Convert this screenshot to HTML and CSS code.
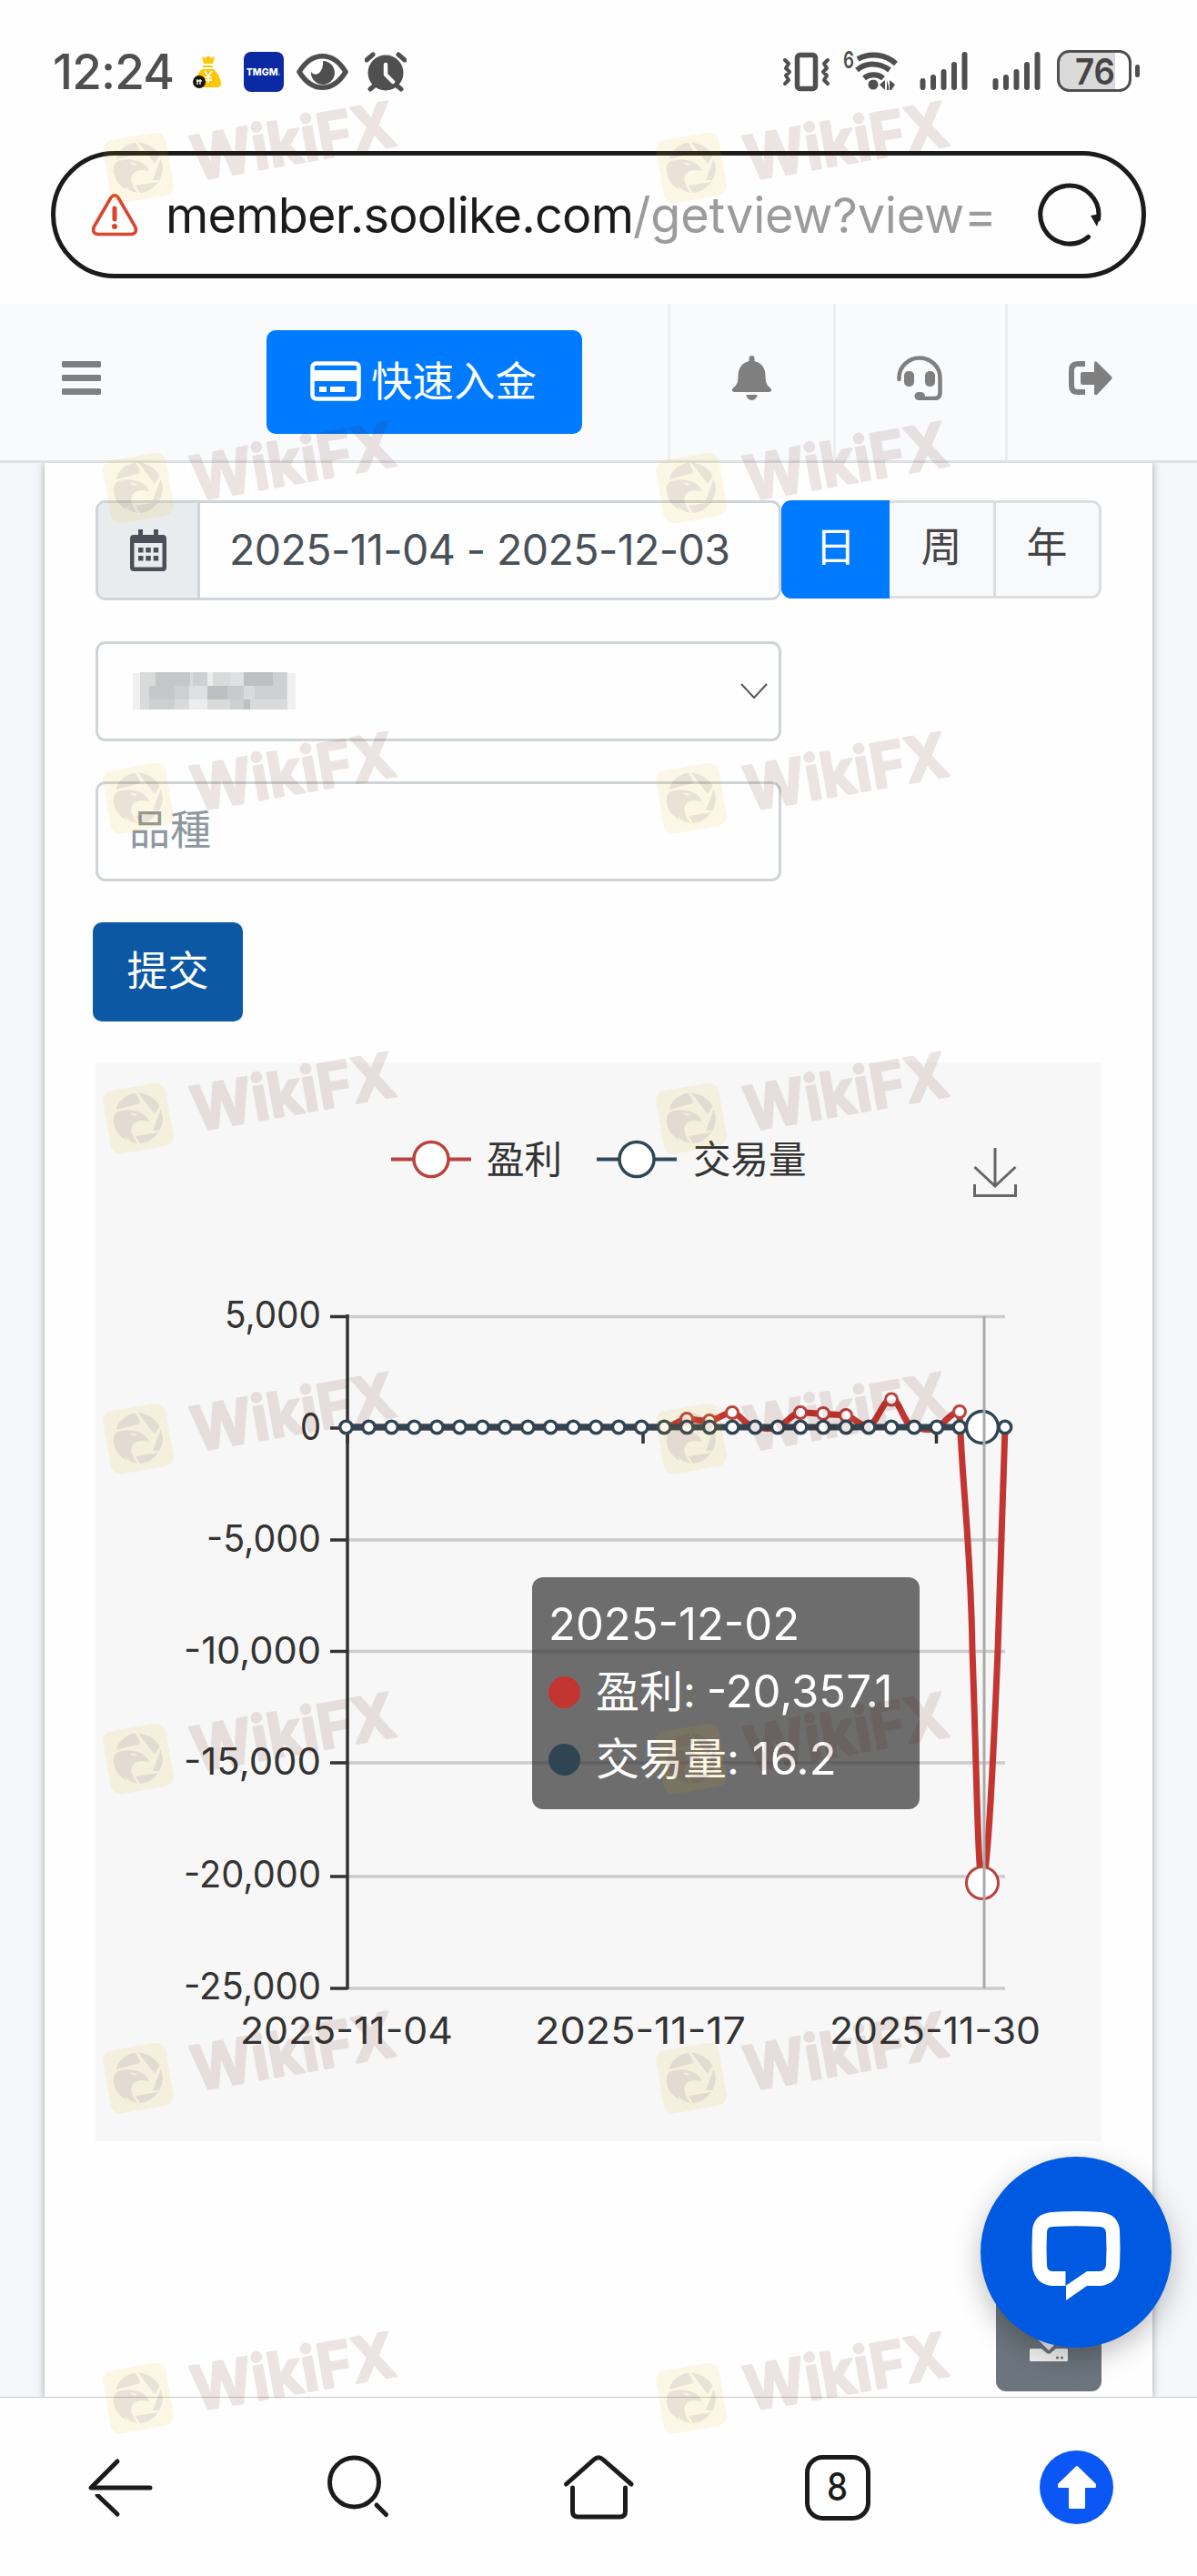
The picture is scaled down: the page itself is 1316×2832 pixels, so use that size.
FILE: index.html
```html
<!DOCTYPE html>
<html lang="zh">
<head>
<meta charset="utf-8">
<title>member.soolike.com</title>
<link rel="stylesheet" href="styles.css">
</head>
<body>
<div class="screen">
  <div class="status">
    <span class="clock">12:24</span>
    <svg class="ic-bag" width="32" height="38" viewBox="212 60 32 38"><path fill="#fbc707" d="M222 62l4 2 3-3 3 3 4-2-2 8h-10zM223 72h11v2h-11zM222 76h13c5 6 8 10 8 16q0 4-4 4h-22c-4-6-1-14 5-20z"/><path d="M225 78l4 6 4-6M229 84v7M225 85h8M225 88h8" stroke="#fff" stroke-width="1.6" fill="none"/><circle cx="219" cy="90" r="7" fill="#1a1510"/><path d="M217 87v6M220 87v6M216 89h6" stroke="#fff" stroke-width="1.3"/></svg>
    <span class="tmgm">TMGM<i>.</i></span>
    <svg class="ic-eye" width="58" height="40" viewBox="326 59 58 40"><path d="M329 79C343 56 366 56 380 79C366 102 343 102 329 79z" fill="none" stroke="#4f4f4f" stroke-width="5.5" stroke-linejoin="round"/><path fill="#4f4f4f" d="M355 67a13 13 0 1 1-13 12c4 6 14 2 13-12z"/></svg>
    <svg class="ic-alarm" width="46" height="44" viewBox="401 57 46 44"><circle cx="424" cy="80" r="19.5" fill="#4f4f4f"/><path d="M403 66l7-6M445 66l-7-6M407 98l6-5M441 98l-6-5" stroke="#4f4f4f" stroke-width="5" stroke-linecap="round"/><path d="M424 71v11l8 8" fill="none" stroke="#fff" stroke-width="4.5" stroke-linecap="round" stroke-linejoin="round"/></svg>
    <span class="grow"></span>
    <svg class="ic-right" width="393" height="70" viewBox="860 40 393 70"><g fill="none" stroke="#4f4f4f" stroke-linecap="round" stroke-linejoin="round"><rect x="876.500" y="60.500" width="20" height="37" rx="3" stroke-width="5.500"/><path stroke-width="4" d="M863 66l4 4-3 5 4 4-4 4 3 5-4 4M910 66l-4 4 3 5-4 4 4 4-3 5 4 4"/><path stroke-width="6" stroke-linecap="butt" d="M943 65C957 57 974 60 985 70M942 77C953 68 967 69 978 77M950 86C956 81 965 81 971 86"/><path stroke-width="6" d="M1014.500 89v7M1026 85v11M1037.500 79v17M1049 71v25M1060.500 60v36M1094.500 89v7M1106 85v11M1117.500 79v17M1129 71v25M1140.500 60v36"/></g><circle cx="960" cy="93" r="5.500" fill="#4f4f4f"/><path fill="#4f4f4f" d="M967 93l6-5v11zM975 88v11h2V95zM978 88l6 5-4 6h-2z"/><text x="927" y="75" font-size="26" font-weight="600" class="lat" fill="#4f4f4f" textLength="12" lengthAdjust="spacingAndGlyphs">6</text><rect x="1163.500" y="56.500" width="79" height="43" rx="12" fill="#fff"/><path fill="#dadada" d="M1226 56.500h-50.500a12 12 0 0 0-12 12v19a12 12 0 0 0 12 12H1226z"/><rect x="1163.500" y="56.500" width="79" height="43" rx="12" fill="none" stroke="#4f4f4f" stroke-width="3"/><rect x="1248" y="71" width="5" height="14" rx="2.500" fill="#4f4f4f"/><text x="1182" y="93" font-size="40" font-weight="600" class="lat" fill="#454545" textLength="44" lengthAdjust="spacingAndGlyphs">76</text></svg>
  </div>

  <div class="url">
    <svg width="52" height="50" viewBox="100 210 52 50"><path d="M121.500 217L103.500 248Q100.500 256 108 256.500H144Q151.500 256 148.500 248L130.500 217Q126 210.500 121.500 217z" fill="none" stroke="#d9452f" stroke-width="3.600"/><path d="M126 228v12" stroke="#d9452f" stroke-width="5" stroke-linecap="round"/><circle cx="126" cy="248" r="3" fill="#d9452f"/></svg>
    <span class="addr">member.soolike.com</span><span class="path">/getview?view=</span>
    <svg class="reload" width="72" height="72" viewBox="1140 199 72 72"><path d="M1196.500 259.500A32 32 0 1 1 1207.500 240" fill="none" stroke="#1b1b1b" stroke-width="5" stroke-linecap="round"/><path fill="#1b1b1b" d="M1199 236l11-2-4 14z"/></svg>
  </div>

  <div class="topbar">
    <svg class="burger" width="43" height="37" viewBox="0 0 43 37"><path fill="#7f7f7f" d="M1 0h41l1 1v5l-1 1H1L0 6V1zM1 15h41l1 1v5l-1 1H1l-1-1v-5zM1 30h41l1 1v5l-1 1H1l-1-1v-5z"/></svg>
    <button class="deposit">
      <svg width="56" height="44" viewBox="0 0 56 44"><rect x="2.500" y="2.500" width="51" height="39" rx="4" fill="none" stroke="#fff" stroke-width="4.500"/><path fill="#fff" d="M2 10h52v12H2zM10 28h8v6h-8zM22 28h16v6H22z"/></svg>
      <span>快速入金</span>
    </button>
    <span class="cell c1"><svg width="43" height="49" viewBox="0 0 43 49"><path fill="#7f7f7f" d="M21.500 0a3 3 0 0 1 3 3v3c8 2 12 8 12 16 0 8 2 11 5.500 13.500 2 2 1 4.500-1.500 4.500H2.500C0 40-1 37.500 1 35.500 4.500 33 6.500 30 6.500 22c0-8 4-14 12-16V3a3 3 0 0 1 3-3zM15.500 43h12a6 6 0 0 1-12 0z"/></svg></span>
    <span class="cell c2"><svg width="50" height="49" viewBox="0 0 50 49"><path d="M2.500 26v-2a22.500 21.500 0 0 1 45 0v17q0 6-6 6H25" fill="none" stroke="#7f7f7f" stroke-width="4.500" stroke-linecap="round"/><rect x="8" y="17" width="11" height="17" rx="5" fill="#7f7f7f"/><rect x="31" y="17" width="11" height="17" rx="5" fill="#7f7f7f"/><path fill="#7f7f7f" d="M24 40h2c4 0 5 3 5 5l-1 4h-6a4.500 4.500 0 0 1 0-9z"/></svg></span>
    <span class="cell c3"><svg width="48" height="38" viewBox="0 0 48 38"><path d="M18 3h-8Q3 3 3 10v17q0 7 7 7h8" fill="none" stroke="#7f7f7f" stroke-width="6"/><path fill="#7f7f7f" d="M15 12h13V2q1-3 3-1l16 16q1 2 0 3L31 37q-2 1-3-1V26H15q-2 0-2-2V14q0-2 2-2z"/></svg></span>
  </div>

  <main class="page">
    <section class="card">
      <div class="row">
        <div class="range">
          <span class="addon"><svg width="40" height="46" viewBox="0 0 40 46"><path fill="#495057" fill-rule="evenodd" d="M9 0h5v6h12V0h5v6h5q4 0 4 4v32q0 4-4 4H4q-4 0-4-4V10q0-4 4-4h5zM4.500 15v26.500h31V15zM9 20h5.500v5.500H9zM17.300 20h5.500v5.500h-5.500zM25.700 20h5.500v5.500h-5.500zM9 29h5.500v5.500H9zM17.300 29h5.500v5.500h-5.500zM25.700 29h5.500v5.500h-5.500z"/></svg></span>
          <span class="dates">2025-11-04 - 2025-12-03</span>
        </div>
        <div class="seg"><span class="on">日</span><span>周</span><span>年</span></div>
      </div>
      <div class="field select">
        <svg width="180" height="42" viewBox="146 739 180 42" shape-rendering="crispEdges"><path fill="#f0f0f0" d="M146 740h179v40H146z"/><path fill="#d9dbdb" d="M154 739h162v41H154z"/><path fill="#c6c7c9" d="M171 739h20v15h-20zM164 754h44v15h-44zM191 739h18v15h-18z"/><path fill="#ccd0d1" d="M212 739h16v15h-16zM192 754h16v15h-16zM280 754h35v15h-35zM253 769h16v11h-16zM164 769h28v11h-28zM300 739h15v15h-15z"/><path fill="#eceded" d="M228 739h6v15h-6zM208 769h20v11h-20z"/><path fill="#bcc0c2" d="M268 739h32v15h-32zM228 754h22v15h-22zM268 769h7v11h-7z"/><path fill="#c8cacb" d="M250 754h18v15h-18z"/><path fill="#dfe0e1" d="M208 754h20v15h-20zM253 739h15v15h-15z"/></svg>
        <svg width="30" height="18" viewBox="0 0 30 18"><path d="M1 1l14 15L29 1" fill="none" stroke="#555" stroke-width="2"/></svg>
      </div>
      <div class="field input">品種</div>
      <button class="submit">提交</button>

      <div class="chart">
        <svg width="1106" height="1186" viewBox="105 1168 1106 1186">
          <g fill="none" stroke-width="4"><path stroke="#b8433f" d="M430 1274.500h88"/><path stroke="#33495a" d="M656 1274.500h88"/></g>
          <circle cx="474" cy="1274.500" r="19" fill="#fff" stroke="#b8433f" stroke-width="3.500"/>
          <circle cx="700" cy="1274.500" r="19" fill="#fff" stroke="#2f4554" stroke-width="3.500"/>
          <g class="lbl" font-size="41.500"><text x="535" y="1290">盈利</text><text x="762" y="1290">交易量</text></g>
          <path d="M1094 1262v41M1071.500 1283l22.500 21 22.500-21M1071.500 1302v12.500h45V1302" fill="none" stroke="#666" stroke-width="3"/>
          <path d="M382 1447.500h723M382 1693h723M382 1815.500h723M382 1938h723M382 2063h723M382 2186h723M382 1570h723" stroke="#ccc" stroke-width="3.500"/>
          <path d="M382 1445V2187" stroke="#333" stroke-width="3.500"/>
          <path d="M363 1447.500h19M363 1570h19M363 1693h19M363 1815.500h19M363 1938h19M363 2063h19M363 2186h19M707 1570v17M1029.500 1570v17M382 1570v17" stroke="#333" stroke-width="3.500"/>
          <g class="lbl lat" font-size="41" text-anchor="end">
            <text x="353" y="1460" textLength="106" lengthAdjust="spacingAndGlyphs">5,000</text><text x="353" y="1583" textLength="23" lengthAdjust="spacingAndGlyphs">0</text>
            <text x="353" y="1706" textLength="126" lengthAdjust="spacingAndGlyphs">-5,000</text><text x="353" y="1829" textLength="151" lengthAdjust="spacingAndGlyphs">-10,000</text>
            <text x="353" y="1951" textLength="151" lengthAdjust="spacingAndGlyphs">-15,000</text><text x="353" y="2075" textLength="151" lengthAdjust="spacingAndGlyphs">-20,000</text>
            <text x="353" y="2198" textLength="151" lengthAdjust="spacingAndGlyphs">-25,000</text>
          </g>
          <g class="lbl lat" font-size="41">
            <text x="264" y="2247" textLength="234" lengthAdjust="spacingAndGlyphs">2025-11-04</text><text x="588" y="2247" textLength="232" lengthAdjust="spacingAndGlyphs">2025-11-17</text><text x="912" y="2247" textLength="232" lengthAdjust="spacingAndGlyphs">2025-11-30</text>
          </g>
          <path d="M381 1569H730C740 1569 748 1560 755 1560S772 1563 780 1562S797 1553 805 1553S820 1569 830 1569S845 1573 855 1569S871 1553 880 1553S897 1554 905 1554.500S922 1555 930 1556S945 1569 955 1567S970 1538.500 980 1538.500S993 1567 1005 1569S1020 1574 1030 1569S1046 1552 1055 1552C1058 1640 1067 1690 1069 1814C1074 1950 1075 2068 1080 2068C1085 2068 1091 1960 1097 1814C1102 1680 1104 1620 1105 1569" fill="none" stroke="#c23531" stroke-width="7" stroke-linejoin="round"/>
          <g fill="#fff" stroke="#b8433f" stroke-width="3"><circle cx="755" cy="1560" r="6.500"/><circle cx="780" cy="1562" r="6.500"/><circle cx="805" cy="1553" r="6.500"/><circle cx="880" cy="1553" r="6.500"/><circle cx="905" cy="1554" r="6.500"/><circle cx="930" cy="1556" r="6.500"/><circle cx="980" cy="1538.500" r="6.500"/><circle cx="1055" cy="1552" r="6.500"/><circle cx="1080" cy="2070" r="17.500"/></g>
          <path d="M381 1569H1105" stroke="#33434f" stroke-width="7"/>
          <g class="dots" fill="#fff" stroke="#2f4554" stroke-width="3.500"></g>
          <path d="M1082 1447V2186" stroke="#aaa" stroke-width="3"/>
        </svg>
        <div class="tip">
          <div class="day">2025-12-02</div>
          <div><i class="r"></i>盈利:<b class="v1">-20,357.1</b></div>
          <div><i class="b"></i>交易量:<b class="v2">16.2</b></div>
        </div>
      </div>
    </section>
    <div class="export"><svg width="42" height="42" viewBox="0 0 42 42"><path fill="#eee" d="M14 0h14v14h8L21 29 6 14h8z"/><path fill="#f3f3f3" d="M1 27h12l6 5q2 1.500 4 0l6-5h12l1 1v12l-1 1H1l-1-1V28z"/><circle cx="30.500" cy="37" r="1.600" fill="#6c757d"/><circle cx="35.500" cy="37" r="1.600" fill="#6c757d"/></svg></div>
    <div class="chat"><svg width="98" height="100" viewBox="0 0 98 100"><path fill="#fff" fill-rule="evenodd" d="M22 2Q49 0 76 2Q95 4 97 21Q98 42 97 62Q95 80 77 83H61L38 99V83H22Q4 81 1 62Q0 42 1 21Q3 4 22 2zM23 18Q17 18 17 24Q16 42 17 60Q17 67 23 67H37.500V83L61 67H75Q81 67 82 60Q83 42 82 24Q81 18 75 18Q49 16.500 23 18z"/></svg></div>
  </main>

  <nav class="nav">
    <svg width="1316" height="196" viewBox="0 2636 1316 196"><g fill="none" stroke="#1b1b1b" stroke-width="5" stroke-linecap="round" stroke-linejoin="round"><path d="M129 2706l-29 29h65"/><path d="M107 2743l22 21"/><circle cx="389.500" cy="2729" r="27"/><path d="M414 2754l10.500 10.500"/><path d="M622.500 2731L653 2704Q658 2699.500 663 2704L694 2731"/><path d="M629.500 2735v26q0 6 6 6h46q6 0 6-6v-26"/><rect x="887.500" y="2701.500" width="67" height="67" rx="17"/></g><path d="M103 2741l8 0" stroke="#fefefe" stroke-width="2"/><text x="909" y="2749" font-size="42" font-weight="500" class="lat" fill="#1b1b1b" textLength="23" lengthAdjust="spacingAndGlyphs">8</text><circle cx="1183.500" cy="2734.500" r="40.500" fill="#0b57f5"/><path fill="#fff" stroke="#fff" stroke-width="3" stroke-linejoin="round" d="M1184 2712.500l19.500 19v2h-12v23h-15v-23h-12v-2z"/></svg>
  </nav>

  <svg class="marks" width="1316" height="2832" viewBox="0 0 1316 2832">
    <defs><g id="wm"><rect x="5" y="5.500" width="70" height="70" rx="11" transform="rotate(-10 40.500 40.500)" fill="rgba(240,180,0,.1)"/><path fill="rgba(60,20,90,.09)" d="M17 26Q25 14 37 12.500L41 20L42 24L16 31zM40 12.500Q56 14 63.500 27L58 36zM64.500 31Q70 42 63 54H56zM62 56Q54 67 42 68L37 60zM13 43Q12 36 18 33Q28 30 35 32Q48 34 52 44L44 43Q36 43 33 49Q30 56 39 68Q29 66 26 60Q26 64 28 65Q14 58 12.600 43zM31 35Q35 39 39 37Q36 34 31 35z"/><text class="wmt" x="103" y="55" transform="rotate(-10 103 55)" textLength="226" lengthAdjust="spacingAndGlyphs">WikiFX</text></g></defs>
    <g class="rows"></g>
  </svg>
</div>
<script src="app.js"></script>
</body>
</html>
```
FILE: styles.css
```css
* { box-sizing: border-box; }
body { margin: 0; background: #fff; font-family: Inter, "Noto Sans CJK SC", sans-serif; }
.screen { position: relative; width: 1316px; height: 2832px; overflow: hidden; background: #fefefe; display: flex; flex-direction: column; }
svg { display: block; flex: none; }
button { border: 0; font: inherit; color: #fff; }
.lat { font-family: Inter, sans-serif; }
.lbl { fill: #333; }

.status { height: 166px; padding: 53px 63px 0 58px; display: flex; align-items: flex-start; }
.clock { width: 154px; margin-top: -4px; font-size: 53px; line-height: 60px; font-weight: 500; letter-spacing: -0.8px; color: #4f4f4f; }
.ic-bag { margin-top: 7px; }
.tmgm { width: 44px; height: 44px; margin: 4px 14px 0 24px; border-radius: 8px; background: #0a2aa4; color: #fff; font-size: 10.5px; line-height: 45px; font-weight: 800; text-align: center; white-space: nowrap; }
.tmgm i { color: #1fb7a0; }
.ic-eye { margin-top: 6px; }
.ic-alarm { margin: 4px 0 0 17px; }
.ic-right { margin-top: -13px; }
.grow { flex: 1; }

.url { height: 140px; margin: 0 56px; padding: 0 43px 0 39px; border: 5px solid #1b1b1b; border-radius: 70px; display: flex; align-items: center; font-size: 54px; line-height: 66px; white-space: pre; }
.url span { margin-top: 2px; }
.addr { margin-left: 30px; width: 514px; color: #1b1b1b; letter-spacing: -0.8px; }
.path { color: #9b9b9b; letter-spacing: -0.2px; }
.url .reload { margin-left: auto; }

.topbar { margin-top: 28px; height: 175px; background: #f8fafc; border-bottom: 3px solid #dee1e3; display: flex; align-items: stretch; }
.burger { margin: 63px 0 0 68px; }
.deposit { margin: 29px 94px 0 182px; width: 347px; height: 114px; padding: 0 0 0 48px; background: #007bff; border-radius: 10px; display: flex; align-items: center; gap: 11px; font-size: 45.5px; line-height: 60px; }
.deposit svg { margin-top: -3px; }
.cell { border-left: 3px solid #eceeef; padding-top: 57px; }
.c1 { width: 182px; padding-left: 68px; }
.c2 { width: 189px; padding-left: 67px; }
.c3 { padding: 63px 0 0 67px; flex: 1; }

.page { position: relative; flex: 1; background: #f4f6fa; overflow: hidden; padding: 0 49px; }
.card { min-height: 100%; padding: 41px 56px 0; background: #fefefe; box-shadow: 0 0 8px rgba(0,0,0,.35); }
.row { display: flex; }
.range { width: 754px; height: 110px; display: flex; border: 3px solid #ced4da; border-radius: 11px; overflow: hidden; }
.addon { width: 112px; background: #e9ecef; border-right: 3px solid #ced4da; display: flex; justify-content: center; align-items: center; }
.dates { padding-left: 32px; font-size: 46.500px; line-height: 102px; color: #495057; white-space: pre; letter-spacing: -0.6px; }
.seg { width: 352px; height: 108px; display: flex; border: 3px solid #dcdddf; border-radius: 11px; background: #f8f9fb; font-size: 45px; line-height: 98px; text-align: center; color: #444; }
.seg span { width: 115px; border-left: 3px solid #dcdddf; }
.seg span:nth-child(2) { border: 0; width: 114px; }
.seg .on { width: 119px; margin: -3px 0 -3px -3px; line-height: 104px; border: 0; background: #007bff; color: #fff; border-radius: 11px 0 0 11px; }
.field { width: 754px; height: 110px; border: 3px solid #ced4d6; border-radius: 11px; display: flex; align-items: center; justify-content: space-between; }
.select { margin-top: 45px; padding: 0 12px 0 38px; }
.input { margin-top: 44px; padding: 0 0 2px 34px; font-size: 45px; line-height: 60px; color: #8f979e; }
.submit { display: block; margin: 45px 0 0 -3px; width: 165px; height: 109px; padding: 0 0 9px; border-radius: 10px; background: #0c58a5; font-size: 45px; }
.chart { position: relative; margin-top: 45px; width: 1106px; height: 1186px; background: #f7f7f7; }
.tip { position: absolute; left: 480px; top: 566px; width: 426px; height: 255px; padding: 15px 0 0 18px; border-radius: 12px; background: rgba(50,50,50,.7); color: #fff; font-size: 48px; line-height: 74px; white-space: nowrap; }
.tip div { display: flex; align-items: center; height: 74px; }
.tip b { font-weight: 400; font-size: 49px; }
.tip .day { font-size: 49px; }
.v1 { margin-left: 12px; letter-spacing: 0; }
.v2 { margin-left: 14px; }
.tip i { width: 35px; height: 35px; margin-right: 17px; border-radius: 50%; }
.tip .r { background: #c23531; }
.tip i.b { background: #2f4554; }
.export { position: absolute; left: 1095px; top: 2004px; width: 116px; height: 116px; border-radius: 11px; background: #6c757d; padding: 42px 37px; }
.chat { position: absolute; left: 1078px; top: 1862px; width: 210px; height: 210px; border-radius: 50%; background: #0059e1; box-shadow: 0 10px 30px rgba(0,0,0,.25); padding: 59px 56px; }
.nav { height: 196px; background: #fefefe; box-shadow: 0 -1px 0 #c6c6c6; position: relative; }
.marks { position: absolute; left: 0; top: 0; pointer-events: none; }
.wmt { font-size: 68px; font-weight: 700; fill: #500a00; stroke: #500a00; stroke-width: 2.5; stroke-linejoin: round; opacity: .1; }
```
FILE: app.js
```js
const NS = 'http://www.w3.org/2000/svg';
const add = (parent, tag, attrs) => {
  const el = document.createElementNS(NS, tag);
  for (const k in attrs) el.setAttribute(k, attrs[k]);
  parent.appendChild(el);
};

const dots = document.querySelector('.dots');
for (let i = 0; i < 30; i++) {
  add(dots, 'circle', { cx: 380.5 + i * 24.98, cy: 1569, r: i === 28 ? 17.5 : 6.8 });
}

const rows = document.querySelector('.rows');
for (const y of [144, 496, 837, 1189, 1541, 1893, 2244, 2596]) {
  for (const x of [112, 720]) add(rows, 'use', { href: '#wm', x, y });
}
```
